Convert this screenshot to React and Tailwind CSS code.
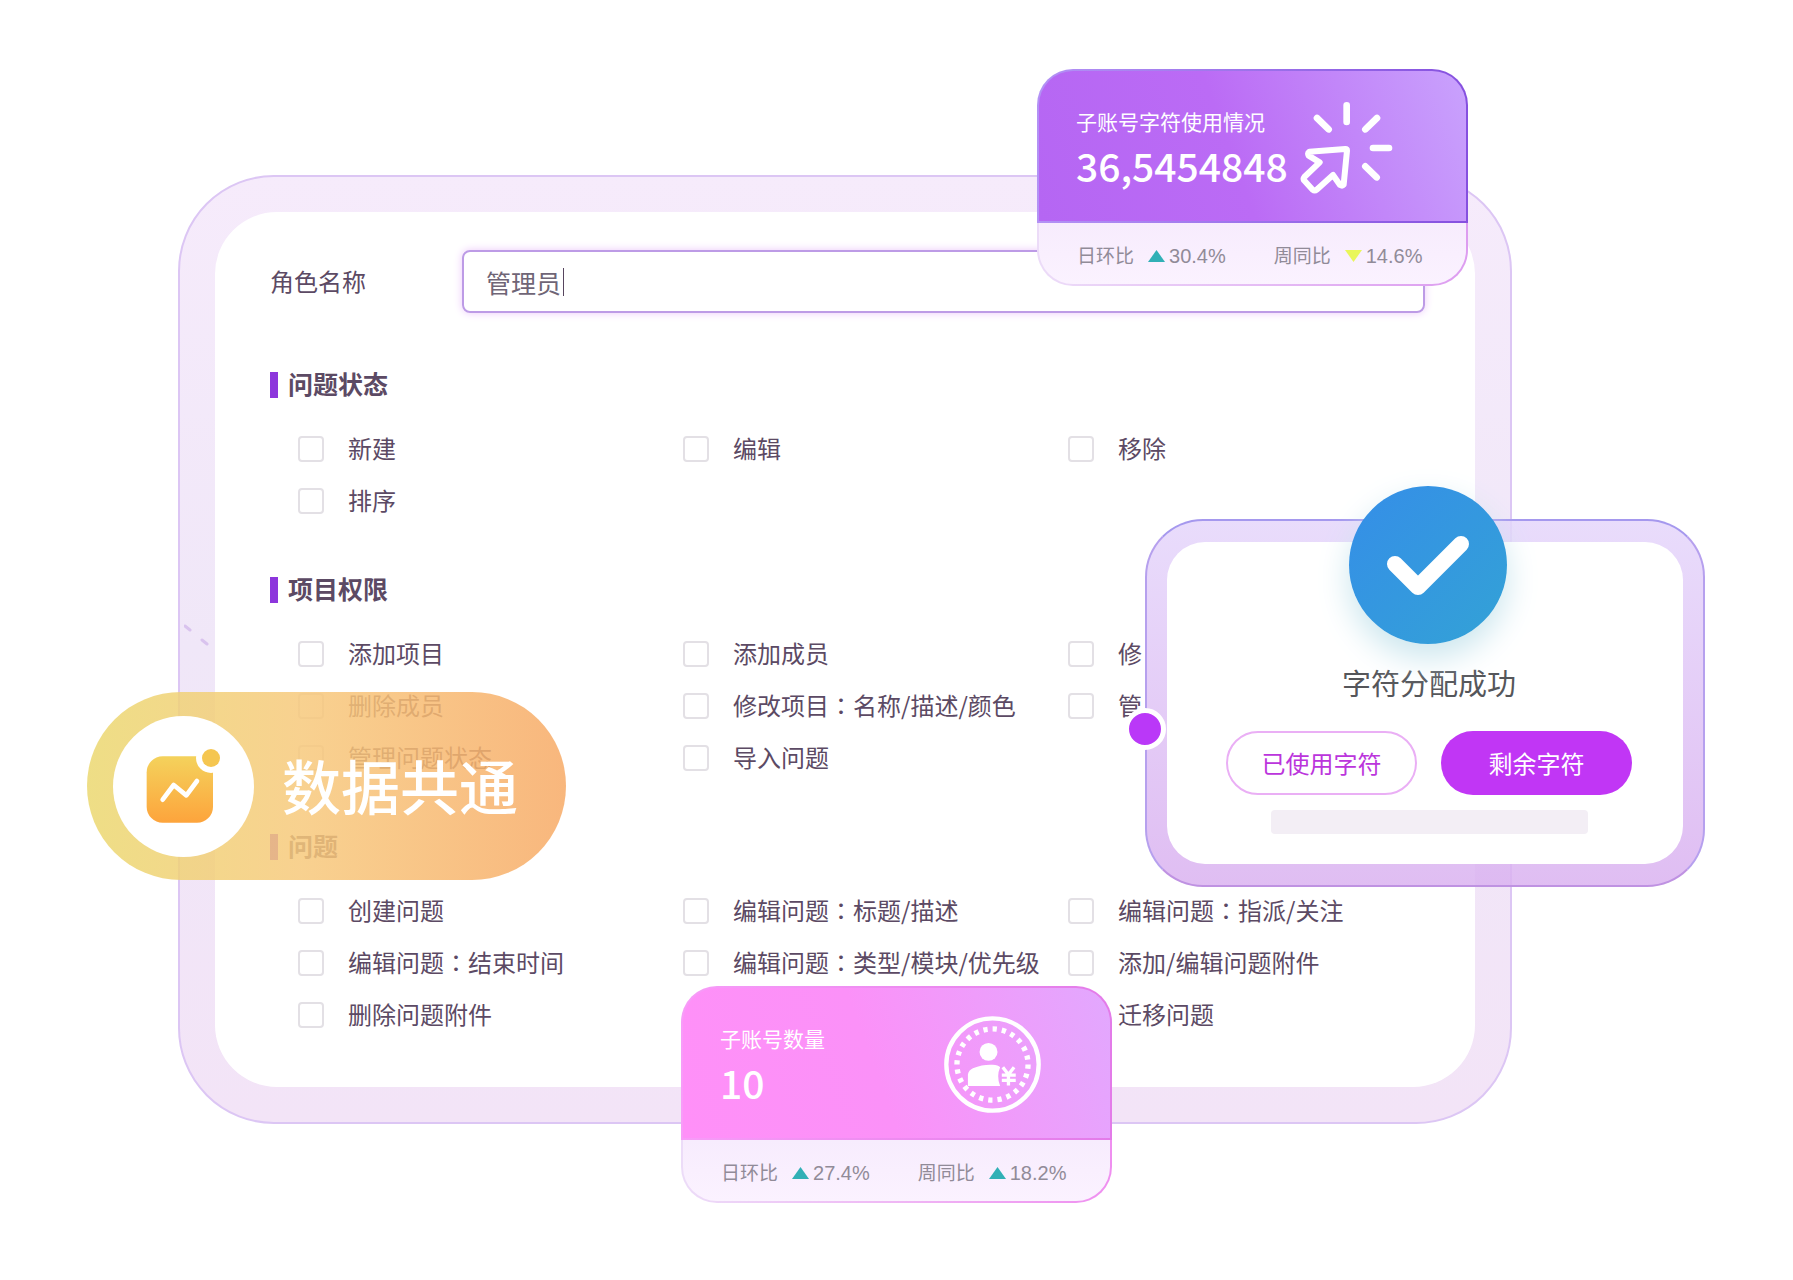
const sections = [
  {
    title: "问题状态",
    items: ["新建", "编辑", "移除", "排序"],
  },
  {
    title: "项目权限",
    items: ["添加项目", "添加成员", "修", "删除成员", "修改项目：名称/描述/颜色", "管", "管理问题状态", "导入问题"],
  },
  {
    title: "问题",
    items: [
      "创建问题",
      "编辑问题：标题/描述",
      "编辑问题：指派/关注",
      "编辑问题：结束时间",
      "编辑问题：类型/模块/优先级",
      "添加/编辑问题附件",
      "删除问题附件",
      null,
      "迁移问题",
    ],
  },
];

const CursorIcon = () => (
  <svg className="w-[93px] h-[95px] mt-0.5 shrink-0" viewBox="16 13 279 285" fill="none" stroke="#fff" strokeWidth="20" strokeLinecap="round" strokeLinejoin="round">
    <path d="M156 26V76M67 64L102 98M247 64L212 98M235 154H283M212 209L246 242" />
    <path d="M44 165L152 157Q157 157 157 162L147 264Q143 269 136 265L115 235L66 279Q60 284 54 279L28 251Q25 246 29 241L75 197L42 177Q38 169 44 165Z" strokeWidth="18" />
  </svg>
);

const CoinIcon = () => (
  <svg className="w-[97px] h-[97px] -mr-1 shrink-0" viewBox="21 17 292 292">
    <circle cx="167" cy="163" r="139" fill="none" stroke="#fff" strokeWidth="13" />
    <circle cx="167" cy="163" r="107" fill="none" stroke="#fff" strokeWidth="16" pathLength="240" strokeDasharray="4.6 5.4" />
    <circle cx="155" cy="125" r="27" fill="#fff" />
    <path d="M93 228V193Q95 180 108 174Q140 162 168 164Q184 165 190 171Q178 198 190 228Z" fill="#fff" />
    <path d="M198 171L215 193L232 171M215 193V226M195 195H237M195 211H237" fill="none" stroke="#fff" strokeWidth="10" />
  </svg>
);

const ChartIcon = () => (
  <svg className="w-[76px] h-[78px]" viewBox="112 106 228 234">
    <defs>
      <linearGradient id="chart-fill" x1="0" y1="0" x2="0" y2="1">
        <stop offset="0" stopColor="#f4d25c" />
        <stop offset="1" stopColor="#fda43c" />
      </linearGradient>
    </defs>
    <rect x="114" y="134" width="199" height="199" rx="48" fill="url(#chart-fill)" />
    <circle cx="307" cy="139" r="45" fill="#fff" />
    <circle cx="307" cy="139" r="27" fill="#f5c650" />
    <path d="M162 264L195 220L233 251L265 208" fill="none" stroke="#fff" strokeWidth="14" strokeLinecap="round" strokeLinejoin="round" />
  </svg>
);

// the TC face centres the full-width colon
const ItemText = ({ text }) => {
  const [name, detail] = text.split("：");
  return (
    <span className="pb-0.5">
      {name}
      {detail && <span className="font-['Noto_Sans_CJK_TC',sans-serif]">：</span>}
      {detail}
    </span>
  );
};

const Change = ({ label, value, down }) => (
  <div className="flex items-center">
    <span className="text-[19px]">{label}</span>
    <svg className="w-[17px] h-3 ml-[14px] mr-1" viewBox="0 0 17 12">
      {down ? <path d="M0 0H17L8.5 12Z" fill="#e9f65a" /> : <path d="M8.5 0L17 12H0Z" fill="#31b0b6" />}
    </svg>
    <span className="font-['Liberation_Sans',sans-serif] text-xl">{value}</span>
  </div>
);

const StatCard = ({ title, value, icon, day, week, headClass, lineClass, footClass }) => (
  <div className="w-[431px]">
    <div className={"rounded-t-[36px] p-0.5 " + lineClass}>
      <div className={"flex justify-between rounded-t-[34px] h-[150px] pl-[37px] pr-[73px] pt-7 " + headClass}>
        <div className="text-white whitespace-nowrap">
          <p className="text-[21px] leading-[44px]">{title}</p>
          <p className="text-[39px] leading-[44px] font-medium">{value}</p>
        </div>
        {icon}
      </div>
    </div>
    <div className={"rounded-b-[36px] px-0.5 pb-0.5 " + footClass}>
      <div className="flex items-center gap-12 rounded-b-[34px] h-[61px] pl-[38px] pt-1 bg-linear-to-b from-[#f7ecfd] to-[#fbf2ff] text-[#918b98]">
        <Change label="日环比" {...day} />
        <Change label="周同比" {...week} />
      </div>
    </div>
  </div>
);

const App = () => {
  return (
    <main className="min-h-screen overflow-hidden bg-white pt-[175px] pb-[155px] pl-[178px] pr-[281px] font-['Noto_Sans_CJK_SC',sans-serif]">
      <div className="relative">
        <div className="rounded-[96px] border-2 border-[#dcc6f4] bg-linear-to-b from-[#f6ebfb] via-[#f0e7f8] to-[#f3e4f7] p-[35px]">
          <form className="rounded-[62px] bg-white pt-[38px] pb-[46px] pl-[55px] pr-[22px] text-2xl text-[#5c4a64]">
            <div className="flex items-center mr-7">
              <label className="w-48 shrink-0 pb-0.5" htmlFor="role">角色名称</label>
              <div className="relative grow">
                <input className="block w-full h-[63px] rounded-lg border-2 border-[#bd9be6] shadow-[0_0_8px_#ecc9fa] pl-[22px] text-[25px] text-[#6f6576] outline-none" id="role" type="text" defaultValue="管理员" />
                <span className="absolute left-[101px] top-[18px] h-7 w-px bg-[#57455f]"></span>
              </div>
            </div>
            <div className="flex flex-col gap-12 mt-[57px]">
              {sections.map((section) => (
                <section key={section.title}>
                  <h2 className="flex items-center gap-[10px] h-[30px] mb-[23px] text-[25px] font-bold">
                    <span className="w-2 h-[26px] bg-[#8d36dc]"></span>
                    <span className="pb-0.5">{section.title}</span>
                  </h2>
                  <div className="grid grid-cols-3 pl-7">
                    {section.items.map((item, i) =>
                      item ? (
                        <label key={item} className="flex items-center gap-6 h-[52px] whitespace-nowrap">
                          <input className="appearance-none w-[26px] h-[26px] shrink-0 rounded border-2 border-[#e3e0e5] bg-white" type="checkbox" />
                          <ItemText text={item} />
                        </label>
                      ) : (
                        <span key={i}></span>
                      )
                    )}
                  </div>
                </section>
              ))}
            </div>
          </form>
        </div>

        <svg className="absolute left-[6px] top-[448px] w-7 h-6" viewBox="0 0 28 24" stroke="#d9c3ee" strokeWidth="3" strokeLinecap="round">
          <path d="M1 3L6 7M18 17L23 21" />
        </svg>

        <div className="absolute right-[44px] top-[-106px]">
          <StatCard
            title="子账号字符使用情况"
            value="36,5454848"
            icon={<CursorIcon />}
            day={{ value: "30.4%" }}
            week={{ value: "14.6%", down: true }}
            lineClass="bg-linear-to-r from-[#b392f5] to-[#8650df]"
            headClass="bg-linear-[70deg] from-[#b566f3] via-[#bb6bf5] via-45% to-[#c9a2fd]"
            footClass="bg-linear-to-r from-[#ecdcf8] to-[#dd9df0]"
          />
        </div>

        <div className="absolute right-[400px] bottom-[-79px]">
          <StatCard
            title="子账号数量"
            value="10"
            icon={<CoinIcon />}
            day={{ value: "27.4%" }}
            week={{ value: "18.2%" }}
            lineClass="bg-linear-to-r from-[#f79cf8] to-[#e37be9]"
            headClass="bg-linear-[70deg] from-[#ff90f8] via-[#fb91f8] via-45% to-[#e2a8fe]"
            footClass="bg-linear-to-r from-[#ecdcf8] to-[#ef8ff0]"
          />
        </div>

        <div className="absolute left-[-91px] top-[517px] flex items-center gap-7 h-[188px] w-[479px] rounded-full pl-[26px] bg-linear-to-r from-[#ebd870]/85 via-[#f7c97c]/85 via-45% to-[#f7aa66]/85">
          <div className="flex items-center justify-center w-[141px] h-[141px] shrink-0 rounded-full bg-white">
            <ChartIcon />
          </div>
          <span className="pb-1 text-[59px] leading-none font-medium text-white whitespace-nowrap">数据共通</span>
        </div>

        <div className="absolute right-[-193px] top-[344px] w-[560px] rounded-[58px] border-2 border-t-[#a598ee] border-x-[#b6a0ee] border-b-[#bf92e2] bg-linear-to-b from-[#e5d6fb]/85 to-[#dab2f0]/85 px-5 py-[21px]">
          <div className="flex flex-col items-center h-[322px] rounded-[38px] bg-white pl-2 pt-[118px]">
            <p className="text-[29px] leading-[44px] text-[#55565a]">字符分配成功</p>
            <div className="flex gap-6 mt-[27px] text-2xl">
              <button className="w-[191px] h-16 rounded-full border-2 border-[#eaaff5] text-[#bb35dc]" type="button">已使用字符</button>
              <button className="w-[191px] h-16 rounded-full bg-[#c136f5] text-white" type="button">剩余字符</button>
            </div>
            <div className="mt-[15px] w-[317px] h-6 rounded bg-[#f3eef5]"></div>
          </div>
          <div className="absolute left-[202px] top-[-35px] flex items-center justify-center w-[158px] h-[158px] rounded-full bg-linear-[135deg] from-[#358ee8] to-[#33a2d6] shadow-[0_14px_32px_#cbe6ee]">
            <svg className="w-[84px] h-[62px]" viewBox="0 0 84 62" fill="none" stroke="#fff" strokeWidth="16" strokeLinecap="round" strokeLinejoin="round">
              <path d="M9 30L32 53L75 10" />
            </svg>
          </div>
          <span className="absolute left-[-23px] top-[187px] w-[42px] h-[42px] rounded-full border-[5px] border-white bg-[#ba38f8]"></span>
        </div>
      </div>
    </main>
  );
};

export default App;
